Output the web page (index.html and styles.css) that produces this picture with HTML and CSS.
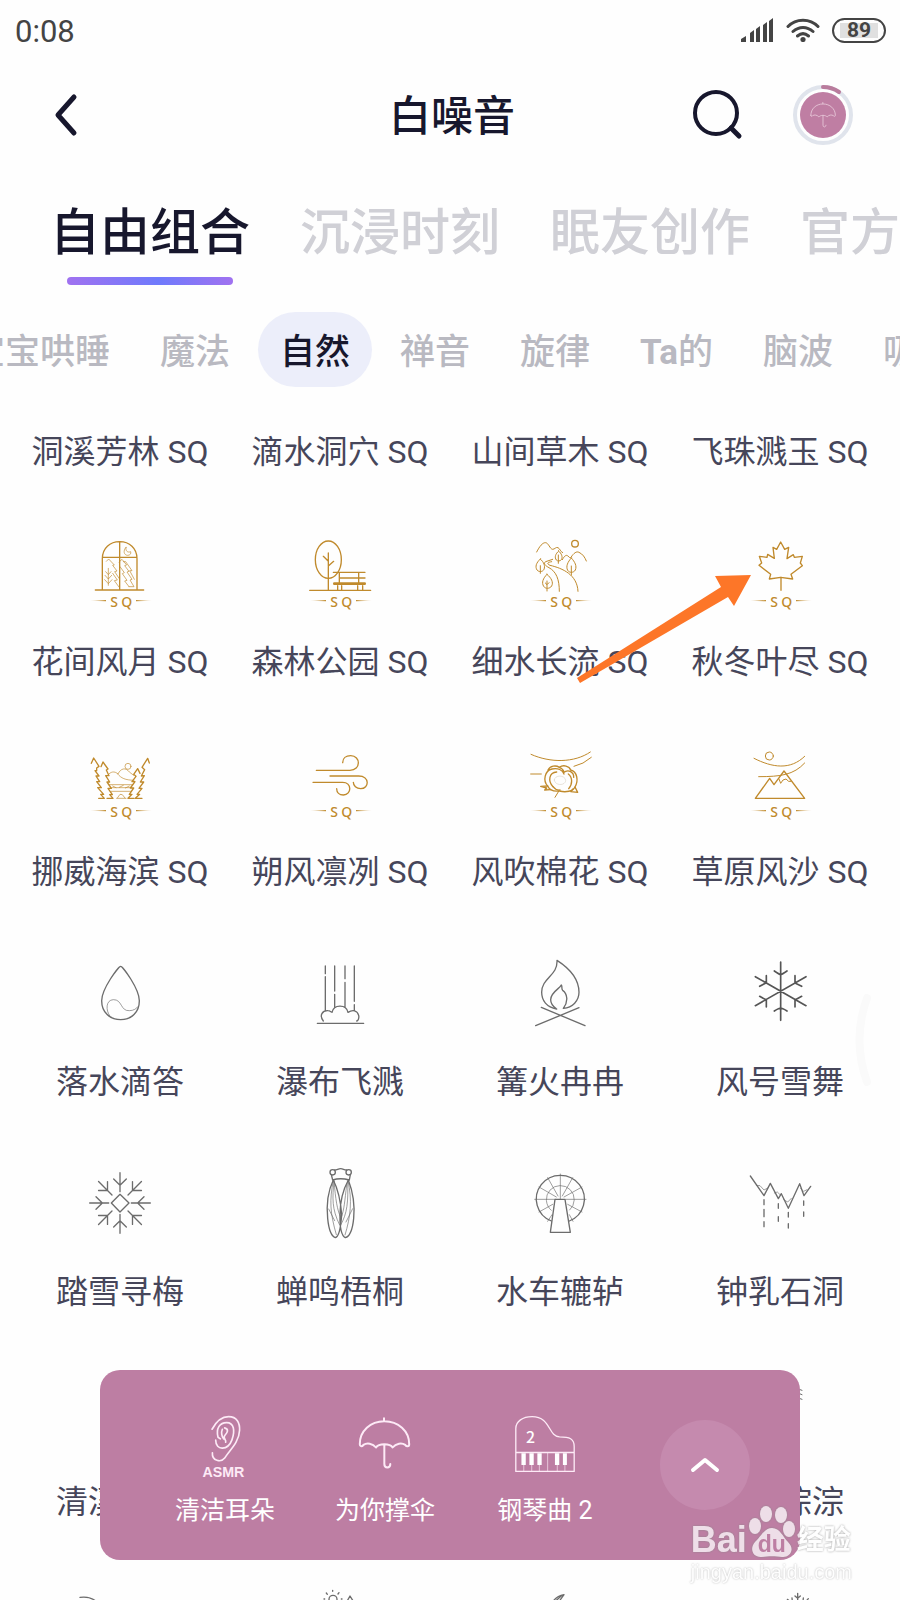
FILE: index.html
```html
<!DOCTYPE html>
<html lang="zh-CN">
<head>
<meta charset="utf-8">
<meta name="viewport" content="width=device-width, initial-scale=1">
<title>白噪音</title>
<link rel="stylesheet" href="styles.css">
</head>
<body>
<svg class="defs" aria-hidden="true">
  <defs>
    <linearGradient id="fadeL"><stop offset="0" stop-color="#c08a2c" stop-opacity=".2"/><stop offset="1" stop-color="#c08a2c"/></linearGradient>
    <linearGradient id="fadeR"><stop offset="0" stop-color="#c08a2c"/><stop offset="1" stop-color="#c08a2c" stop-opacity=".2"/></linearGradient>
    <symbol id="sq" viewBox="0 0 300 300">
      <text class="sq-text" x="121 154" y="254">SQ</text>
      <path d="M60 236L108 234V238Z" fill="url(#fadeL)" stroke="none"/>
      <path d="M246 236L198 234V238Z" fill="url(#fadeR)" stroke="none"/>
    </symbol>
    <symbol id="umbrella" viewBox="800 165 170 170">
      <path d="M884 174V182M811 252C811 212 843 183 885 183S960 212 960 252C960 260 952 260 948 254C938 247 920 249 910 262C902 249 868 249 860 262C850 249 832 247 822 254C818 260 811 260 811 252ZM885 252V312C885 326 903 326 903 312"/>
    </symbol>
  </defs>
</svg>

<div class="app">
  <div class="status">
    <span class="clock">0:08</span>
    <div class="status-icons">
      <svg class="signal" viewBox="0 0 33 24"><path d="M0 24V21L5 18V24ZM9 24V15L13 12V24ZM15 24V11L19 8V24ZM22 24V7L26 4V24ZM28 24V3L32 0V24Z"/></svg>
      <svg class="wifi" viewBox="0 0 34 24"><path d="M2 8.500C10 0 24 0 32 8.500M7 13.500C13 8 21 8 27 13.500M11.500 18C15 15 19 15 22.500 18"/><circle cx="17" cy="21.500" r="2.600"/></svg>
      <span class="battery">89</span>
    </div>
  </div>

  <header class="header">
    <button class="icon-button back" aria-label="返回"><svg viewBox="0 0 28 44"><path d="M24 4L8 22L24 40"/></svg></button>
    <h1 class="title">白噪音</h1>
    <div class="header-actions">
      <button class="icon-button search" aria-label="搜索"><svg viewBox="0 0 52 52"><circle cx="24" cy="24" r="21"/><path d="M39 39L47 47"/></svg></button>
      <button class="icon-button playing" aria-label="正在播放">
        <svg viewBox="0 0 62 62"><circle class="ring" cx="31" cy="31" r="28"/><circle class="disc" cx="31" cy="31" r="23"/><path class="arc" d="M31 3A28 28 0 0 1 47 8"/><use class="mini" href="#umbrella" x="17" y="17" width="28" height="28"/></svg>
      </button>
    </div>
  </header>

  <nav class="tabs" aria-label="分类">
    <button class="tab active">自由组合</button>
    <button class="tab">沉浸时刻</button>
    <button class="tab">眠友创作</button>
    <button class="tab">官方推荐</button>
  </nav>

  <nav class="chips" aria-label="主题">
    <button class="chip">宝宝哄睡</button>
    <button class="chip">魔法</button>
    <button class="chip active">自然</button>
    <button class="chip">禅音</button>
    <button class="chip">旋律</button>
    <button class="chip"><b>Ta</b>的</button>
    <button class="chip">脑波</button>
    <button class="chip">吸引</button>
  </nav>

  <main class="sounds">
    <button class="sound">洞溪芳林 SQ</button>
    <button class="sound">滴水洞穴 SQ</button>
    <button class="sound">山间草木 SQ</button>
    <button class="sound">飞珠溅玉 SQ</button>

    <button class="sound">
      <svg class="gold" viewBox="30 6 300 300">
        <path d="M127 210V116C127 84 150 65 179 65S231 84 231 116V210M127 112H231M179 65V210M106 210H251"/>
        <path class="thin" d="M198 82C188 92 192 106 203 106C210 106 214 101 212 95C202 99 196 92 198 82ZM145 145V196M137 155L145 164L153 155M135 166L145 177L155 166M134 179L145 191L156 179M139 124L146 117L163 135L158 136L171 153L164 155L178 176M177 126L186 118L200 135L194 137L207 154L201 156L216 178L210 180L222 200H207M190 125L197 125L216 152H209L223 178M158 160L172 180L163 182L177 201M180 140L193 158L187 161L201 181L194 183L207 200"/>
        <use href="#sq" x="30" y="6" width="300" height="300"/>
      </svg>花间风月 SQ
    </button>
    <button class="sound">
      <svg class="gold" viewBox="690 6 300 300">
        <ellipse cx="805" cy="119" rx="39" ry="56"/>
        <path d="M805 99V210M790 109L805 124M821 124L805 138M749 211H932M820 157H915M838 157V188M896 157V188M838 174H915M833 197V210M845 197V210M893 197V210M908 197V210"/><path d="M823 191H914" stroke-width="8"/>
        <use href="#sq" x="690" y="6" width="300" height="300"/>
      </svg>森林公园 SQ
    </button>
    <button class="sound">
      <svg class="gold" viewBox="30 6 300 300">
        <circle cx="225" cy="71" r="10"/>
        <path class="mid" d="M110 96C119 78 128 68 136 68C146 68 149 87 158 88C164 88 168 80 174 83C180 86 181 95 188 98M187 119C194 106 199 104 204 108C208 112 210 115 213 112C221 99 230 93 237 97C249 103 254 111 259 123M158 118L137 125C128 130 137 138 147 143C169 155 178 178 178 214M155 125C146 126 137 130 150 136C188 145 232 164 234 214M176 93C166 102 163 112 169 120C172 124 181 124 184 119C189 111 185 101 176 93ZM175 105V130M121 117C108 129 105 140 111 150C117 157 128 156 132 148C136 138 132 127 121 117ZM121 137V160M214 114C203 126 197 139 203 151C208 159 221 159 226 150C231 138 225 126 214 114ZM214 138V165M141 163C129 175 124 188 131 199C136 207 149 207 155 198C161 187 154 174 141 163ZM141 183V213M136 189L141 194L147 188"/>
        <use href="#sq" x="30" y="6" width="300" height="300"/>
      </svg>细水长流 SQ
    </button>
    <button class="sound">
      <svg class="gold" viewBox="690 6 300 300">
        <path d="M842 66L830 88L819 82L823 115L803 103L801 112L778 109L785 129L777 136L812 163L808 177L842 172L878 177L873 163L907 137L901 129L907 109L883 112L880 104L861 116L866 82L854 88ZM843 172V211"/>
        <use href="#sq" x="690" y="6" width="300" height="300"/>
      </svg>秋冬叶尽 SQ
    </button>

    <button class="sound">
      <svg class="gold" viewBox="30 636 300 300">
        <path d="M94 730L101 714L117 739L110 744V752H105L117 768H108L119 785H110L124 803H113L131 823H122L133 835H116M123 740L129 726L144 747L139 750L147 767L137 767L149 786H141L154 805H144L157 824H149L159 835H141M268 729L263 715L246 742L254 749L244 768L253 767L241 786H251L237 805H246L231 823H239L226 835H246M240 760L233 746L221 763L228 769L216 785H225L211 804H221L208 823H216L204 835H222"/>
        <path class="thin" d="M144 765C152 755 163 752 174 762C182 745 197 741 208 756L221 766M173 762C184 775 195 780 222 781M145 794H218M151 803H214M158 798L168 803M178 802L190 796M196 804L208 798M154 814H213M172 834L180 823L187 824L195 834M170 835H198"/><circle class="thin" cx="204" cy="739" r="9"/>
        <use href="#sq" x="30" y="636" width="300" height="300"/>
      </svg>挪威海滨 SQ
    </button>
    <button class="sound">
      <svg class="gold" viewBox="690 636 300 300">
        <path d="M769 751H870C903 751 903 707 872 707C858 707 848 715 848 728M810 768H896C930 768 928 806 902 806C889 806 880 797 880 787M759 787H848C876 787 876 824 850 825C838 825 830 817 830 806"/>
        <use href="#sq" x="690" y="636" width="300" height="300"/>
      </svg>朔风凛冽 SQ
    </button>
    <button class="sound">
      <svg class="gold" viewBox="30 636 300 300">
        <path class="mid" d="M93 703C151 729 223 729 271 696M222 739Q250 733 274 712M92 762H124M176 814L165 832"/>
        <path d="M143 798C128 782 134 752 156 747C174 743 188 750 192 762M144 750C150 737 168 735 178 742C190 733 208 738 212 750C232 755 236 782 225 801M178 742C184 744 190 750 192 756M190 758C206 746 222 757 221 772M143 798C148 809 162 815 178 813C198 818 219 814 225 801M159 800C143 784 147 757 170 756M205 762C218 772 218 794 206 806"/>
        <path class="thin" stroke="#ddd6c8" d="M163 780C163 764 195 764 197 781C197 797 165 799 163 780Z"/>
        <path d="M143 798L122 799L140 804L134 810L152 809M225 801L233 817L212 815L219 807M159 800C165 808 172 811 180 810"/>
        <use href="#sq" x="30" y="636" width="300" height="300"/>
      </svg>风吹棉花 SQ
    </button>
    <button class="sound">
      <svg class="gold" viewBox="690 636 300 300">
        <circle class="mid" cx="808" cy="708" r="12"/>
        <path class="mid" d="M762 715C817 743 871 751 914 709M776 770C842 770 881 765 914 729M837 777L842 790L849 780L858 777L866 784H872"/>
        <path d="M766 835L809 775L822 794L852 753L914 835Z"/>
        <use href="#sq" x="690" y="636" width="300" height="300"/>
      </svg>草原风沙 SQ
    </button>

    <button class="sound">
      <svg class="gray" viewBox="30 6 300 300">
        <path d="M182 79C176 79 125 146 125 182C125 217 150 239 182 239S238 217 238 182C238 146 188 79 182 79Z"/>
        <path class="thin" d="M149 227C137 211 137 180 160 179C187 178 181 214 208 212C221 212 229 206 235 199"/>
      </svg>落水滴答
    </button>
    <button class="sound">
      <svg class="gray" viewBox="690 6 300 300">
        <path d="M796 78V101M796 110V211M824 78V153M824 163V201M855 78V116M855 127V200M883 78V184M883 194V211M790 243C777 226 787 211 804 212C809 212 815 217 816 217C821 192 859 192 864 217C878 208 892 211 896 226C898 234 894 243 890 243M772 250H911"/>
      </svg>瀑布飞溅
    </button>
    <button class="sound">
      <svg class="gray" viewBox="30 6 300 300">
        <path d="M171 61C210 86 237 118 237 157C237 182 218 203 190 205C206 184 202 161 188 151C183 146 188 138 184 135C180 146 152 156 152 179C152 191 160 200 170 207C140 202 125 182 125 157C125 113 174 107 171 61ZM124 202L255 257M237 203L107 257"/>
      </svg>篝火冉冉
    </button>
    <button class="sound">
      <svg class="gray dark" viewBox="690 6 300 300">
        <path d="M842 66V241M766 110L918 197M918 110L766 197M823 93Q838 103 842 104Q846 103 861 93M823 213Q838 204 842 204Q846 204 861 213M799 107V128L779 139M885 107V129L905 139M779 169L799 180V201M905 169L885 180V201"/>
      </svg>风号雪舞
    </button>

    <button class="sound">
      <svg class="gray" viewBox="30 636 300 300">
        <path d="M154 789L180 763L207 789L180 816Z"/>
        <g transform="translate(180 789)"><g id="arms"><path id="arm" d="M0-91V-34M-19-72L0-53L19-72"/><use href="#arm" transform="rotate(45)"/><use href="#arm" transform="rotate(90)"/><use href="#arm" transform="rotate(135)"/></g><use href="#arms" transform="rotate(180)"/></g>
      </svg>踏雪寻梅
    </button>
    <button class="sound">
      <svg class="gray" viewBox="690 636 300 300">
        <circle cx="818" cy="697" r="8"/><circle cx="866" cy="697" r="8"/>
        <path d="M824 690C832 690 834 686 842 686S851 690 860 690M814 704L818 720C833 715 850 715 868 720L871 704M820 720C805 751 799 794 803 835C806 866 815 889 826 893C835 891 842 868 845 824C842 783 832 744 820 720ZM865 720C877 751 885 794 881 835C878 866 870 889 856 893C847 888 839 868 840 824C840 783 852 744 865 720Z"/>
        <path class="thin" d="M820 722C808 781 810 818 829 884M822 724C817 773 815 807 839 855M822 722C827 780 831 808 842 832M864 722C877 781 872 830 855 885M863 724C865 785 862 820 842 855M860 735C854 784 853 807 844 832M806 807L824 842M878 806L858 846M842 815V835"/>
      </svg>蝉鸣梧桐
    </button>
    <button class="sound">
      <svg class="gray" viewBox="30 636 300 300">
        <path d="M154 843A72 71 0 1 1 208 843"/>
        <path class="thin" d="M154 811A42 42 0 1 1 209 810M181 702V778M104 778H167M197 778H258M143 713L174 768M218 713L187 768M117 741L169 771M246 741L192 771M117 816L158 793M246 816L203 793M143 844L156 824M219 844L208 824"/>
        <path d="M165 778H195L211 877H151Z"/>
      </svg>水车辘轳
    </button>
    <button class="sound">
      <svg class="gray" viewBox="690 636 300 300">
        <path d="M751 708L792 767L811 730L835 776L844 761L865 805L899 731L912 767L932 739M792 779V794M792 808V830M792 845V860M835 791V805M835 830V844M865 817V831M865 851V864M911 783V796M911 816V829"/>
        <path class="thin" d="M769 736L780 737L792 750L805 743M823 759L832 756L841 765M851 779L863 786L874 775M902 746L911 754L921 749"/>
      </svg>钟乳石洞
    </button>

    <button class="sound"><svg class="gray" viewBox="-60 6 300 300"></svg>清溪流水</button>
    <span></span>
    <span></span>
    <button class="sound">
      <svg class="gray" viewBox="840 6 300 300"><path class="mid" d="M1036 84L1056 91M1036 96L1056 104M1036 111L1056 118"/></svg>泉水淙淙
    </button>

    <button class="sound" aria-label="山丘"><svg class="gray" viewBox="-60 636 300 300"><path d="M-30 712Q0 708 18 724"/></svg></button>
    <button class="sound" aria-label="晴日"><svg class="gray" viewBox="600 636 300 300"><circle cx="729" cy="718" r="12"/><path d="M728 691V694M709 699L712 703M747 698L744 702M702 717H704M754 717H756M771 724L780 708L790 724"/></svg></button>
    <button class="sound" aria-label="羽毛"><svg class="gray" viewBox="180 636 300 300"><path d="M342 704Q322 707 309 724M342 704L329 722M336 706L318 722"/></svg></button>
    <button class="sound" aria-label="冰晶"><svg class="gray" viewBox="840 636 300 300"><path d="M1043 700V724M1035 708L1043 715L1051 708M1012 718L1020 724M1026 714L1027 724M1060 714L1059 724M1075 716L1068 724"/></svg></button>
  </main>

  <svg class="pointer" viewBox="0 0 176 110" aria-hidden="true"><path d="M1 104L145 13L139 2L175 1L158 32L152 23L4 109Z"/></svg>
  <svg class="edge" viewBox="0 0 18 92" aria-hidden="true"><path d="M13 4Q-2 46 13 88"/></svg>

  <section class="player" aria-label="当前组合">
    <button class="track">
      <svg viewBox="295 155 225 205"><path d="M370 207C384 181 401 169 420 169C445 169 454 188 453 210C452 247 419 274 408 294C397 308 369 303 371 278M381 240C381 273 418 271 430 239C440 211 436 187 414 187C393 187 381 205 388 231L395 236M408 203C422 207 416 218 409 225C400 234 414 238 411 246M401 207C397 216 399 230 405 236" stroke-width="5"/><text class="asmr" x="341" y="351">ASMR</text></svg>
      清洁耳朵
    </button>
    <button class="track">
      <svg viewBox="773 155 225 205"><use href="#umbrella" x="800" y="165" width="170" height="170"/></svg>
      为你撑伞
    </button>
    <button class="track">
      <svg viewBox="173 155 225 205"><path d="M199 334V205C199 183 220 169 248 169C305 169 296 229 331 230C361 230 375 235 375 259V334ZM199 277H375" stroke-width="4"/><path d="M223 315V334M247 315V334M270 315V334M295 277V334M324 315V334M347 315V334" stroke-width="2"/><path d="M216 279H229V315H216ZM240 279H253V315H240ZM264 279H277V315H264ZM317 279H330V315H317ZM341 279H353V315H341Z" fill="#fff" stroke="none"/><text class="two" x="230" y="247">2</text></svg>
      钢琴曲 2
    </button>
    <button class="expand" aria-label="展开"><svg viewBox="0 0 30 18"><path d="M3 14L15 4L27 14"/></svg></button>
  </section>

  <div class="watermark">
    <div class="brand"><span>Bai</span>
      <span class="paw"><svg viewBox="0 0 46 52"><ellipse cx="6" cy="20" rx="6" ry="8"/><ellipse cx="17" cy="8" rx="6" ry="8"/><ellipse cx="32" cy="9" rx="6" ry="8"/><ellipse cx="40" cy="23" rx="6" ry="8"/><path d="M23 22C31 22 34 31 39 36C47 44 40 52 33 51C27 50 19 50 13 51C4 52 0 43 6 36C12 31 15 22 23 22Z"/></svg><b>du</b></span>
      <span class="cn">经验</span></div>
    <div class="site">jingyan.baidu.com</div>
  </div>
</div>
</body>
</html>
```

FILE: styles.css
```css
* { box-sizing: border-box; }

body {
  margin: 0;
  background: #fefefe;
  font-family: Roboto, "Noto Sans CJK SC", sans-serif;
  color: #17172d;
}

button {
  margin: 0;
  padding: 0;
  border: 0;
  background: none;
  color: inherit;
  font: inherit;
  white-space: nowrap;
}

svg { display: block; fill: none; stroke-linecap: round; stroke-linejoin: round; }
.defs { position: absolute; width: 0; height: 0; }

.app {
  position: relative;
  display: flex;
  flex-direction: column;
  height: 100vh;
  overflow: hidden;
}

.status {
  display: flex;
  flex: none;
  align-items: center;
  justify-content: space-between;
  height: 60px;
  padding: 0 14px 0 15px;
  color: #444;
}
.clock { font-size: 31px; line-height: 36px; padding-top: 4px; }
.status-icons { display: flex; align-items: center; gap: 12px; }
.signal { width: 33px; height: 24px; fill: #444; }
.wifi { width: 34px; height: 24px; stroke: #444; stroke-width: 3; }
.wifi circle { fill: #444; stroke: none; }
.battery {
  width: 54px;
  height: 25px;
  border: 2px solid #444;
  border-radius: 13px;
  background: linear-gradient(#e0e0e0, #e0e0e0) center / 38px 15px no-repeat;
  font-size: 21px;
  font-weight: 700;
  line-height: 21px;
  text-align: center;
}

.header {
  display: grid;
  flex: none;
  grid-template-columns: 1fr auto 1fr;
  align-items: center;
  height: 110px;
  padding: 0 46px 0 50px;
}
.icon-button svg { stroke: #17172d; stroke-width: 5; }
.back svg { width: 28px; height: 44px; }
.title { margin: 0; padding-top: 4px; font-size: 42px; font-weight: 500; line-height: 50px; }
.header-actions { display: flex; align-items: center; justify-content: flex-end; gap: 48px; }
.search svg { width: 52px; height: 52px; }
.search circle { stroke-width: 4; }
.playing svg { width: 62px; height: 62px; }
.playing .ring { stroke: #e0e4ec; stroke-width: 4; }
.playing .disc { fill: #bf7ea3; stroke: none; }
.playing .arc { stroke: #b97c9d; stroke-width: 4; }
.playing .mini { stroke: #e3bfd2; stroke-width: 6; }

.tabs {
  display: flex;
  flex: none;
  gap: 50px;
  padding: 35px 0 0 50px;
  overflow: hidden;
}
.tab {
  position: relative;
  padding-bottom: 24px;
  color: #d0d0d6;
  font-size: 50px;
  font-weight: 500;
  line-height: 56px;
}
.tab.active { color: #17172d; }
.tab.active::after {
  content: "";
  position: absolute;
  right: 17px;
  bottom: 0;
  left: 17px;
  height: 8px;
  border-radius: 4px;
  background: linear-gradient(90deg, #a072f0, #6f7afc 55%, #a072f0);
}

.chips {
  display: flex;
  flex: none;
  gap: 6px;
  margin: 27px 0 0 -52px;
  overflow: hidden;
}
.chip {
  flex: none;
  height: 75px;
  padding: 0 22px 2px;
  border-radius: 38px;
  color: #b9b9c1;
  font-size: 35px;
  font-weight: 500;
}
.chip.active { background: #eceefa; color: #17172d; }

.sounds {
  display: grid;
  flex: 1;
  grid-template-columns: repeat(4, 1fr);
  align-content: start;
  gap: 48px 0;
  min-height: 0;
  padding: 43px 10px 0;
  overflow: hidden;
}
.sound {
  display: flex;
  flex-direction: column;
  align-items: center;
  gap: 18px;
  color: #46465a;
  font-size: 32px;
  line-height: 44px;
}
.sound svg { width: 100px; height: 100px; }
.gold { stroke: #c08a2c; stroke-width: 4; }
.gray { stroke: #6c6c6c; stroke-width: 4; }
.dark { stroke: #555; stroke-width: 5; }
.mid { stroke-width: 3; }
.thin { stroke-width: 2; }
.sq-text { fill: #c08a2c; stroke: none; font: 500 42px "Noto Sans", sans-serif; }

.pointer { position: absolute; top: 574px; left: 576px; width: 176px; height: 110px; fill: #fd7628; }
.edge { position: absolute; top: 994px; right: 28px; width: 18px; height: 92px; stroke: #fafafa; stroke-width: 8; }

.player {
  position: absolute;
  right: 100px;
  bottom: 40px;
  left: 100px;
  display: grid;
  grid-template-columns: repeat(4, 1fr);
  align-items: center;
  justify-items: center;
  height: 190px;
  padding: 0 15px 0 45px;
  border-radius: 20px;
  background: #bd7ea3;
  color: #fff;
}
.track {
  display: flex;
  flex-direction: column;
  align-items: center;
  gap: 14px;
  padding-top: 10px;
  font-size: 25px;
  line-height: 34px;
}
.track svg { width: 75px; height: 68px; stroke: #fdeaf6; stroke-width: 6; }
.asmr { fill: #fdeaf6; stroke: none; font: 700 43px "Liberation Sans", sans-serif; }
.two { fill: #fff; stroke: none; font: 500 48px "Noto Sans CJK SC", sans-serif; }
.expand {
  display: grid;
  place-items: center;
  width: 90px;
  height: 90px;
  border-radius: 50%;
  background: #c58aae;
}
.expand svg { width: 30px; height: 18px; stroke: #fff; stroke-width: 4; }

.watermark {
  position: absolute;
  right: 48px;
  bottom: 16px;
  color: #fff;
  opacity: 0.75;
}
.brand {
  display: flex;
  align-items: flex-end;
  font: 700 36px/36px "Liberation Sans", "Noto Sans CJK SC", sans-serif;
  filter: drop-shadow(0 0 1px #888);
}
.paw { position: relative; margin: 0 2px; }
.paw svg { width: 46px; height: 52px; fill: #fff; }
.paw b {
  position: absolute;
  right: 0;
  bottom: 0;
  left: 0;
  color: #bd7ea3;
  font-size: 23px;
  line-height: 28px;
  text-align: center;
}
.cn { font-size: 27px; }
.site {
  margin-top: 2px;
  font: 20px/24px "Liberation Sans", sans-serif;
  text-shadow: 0 0 2px #999;
}
```
